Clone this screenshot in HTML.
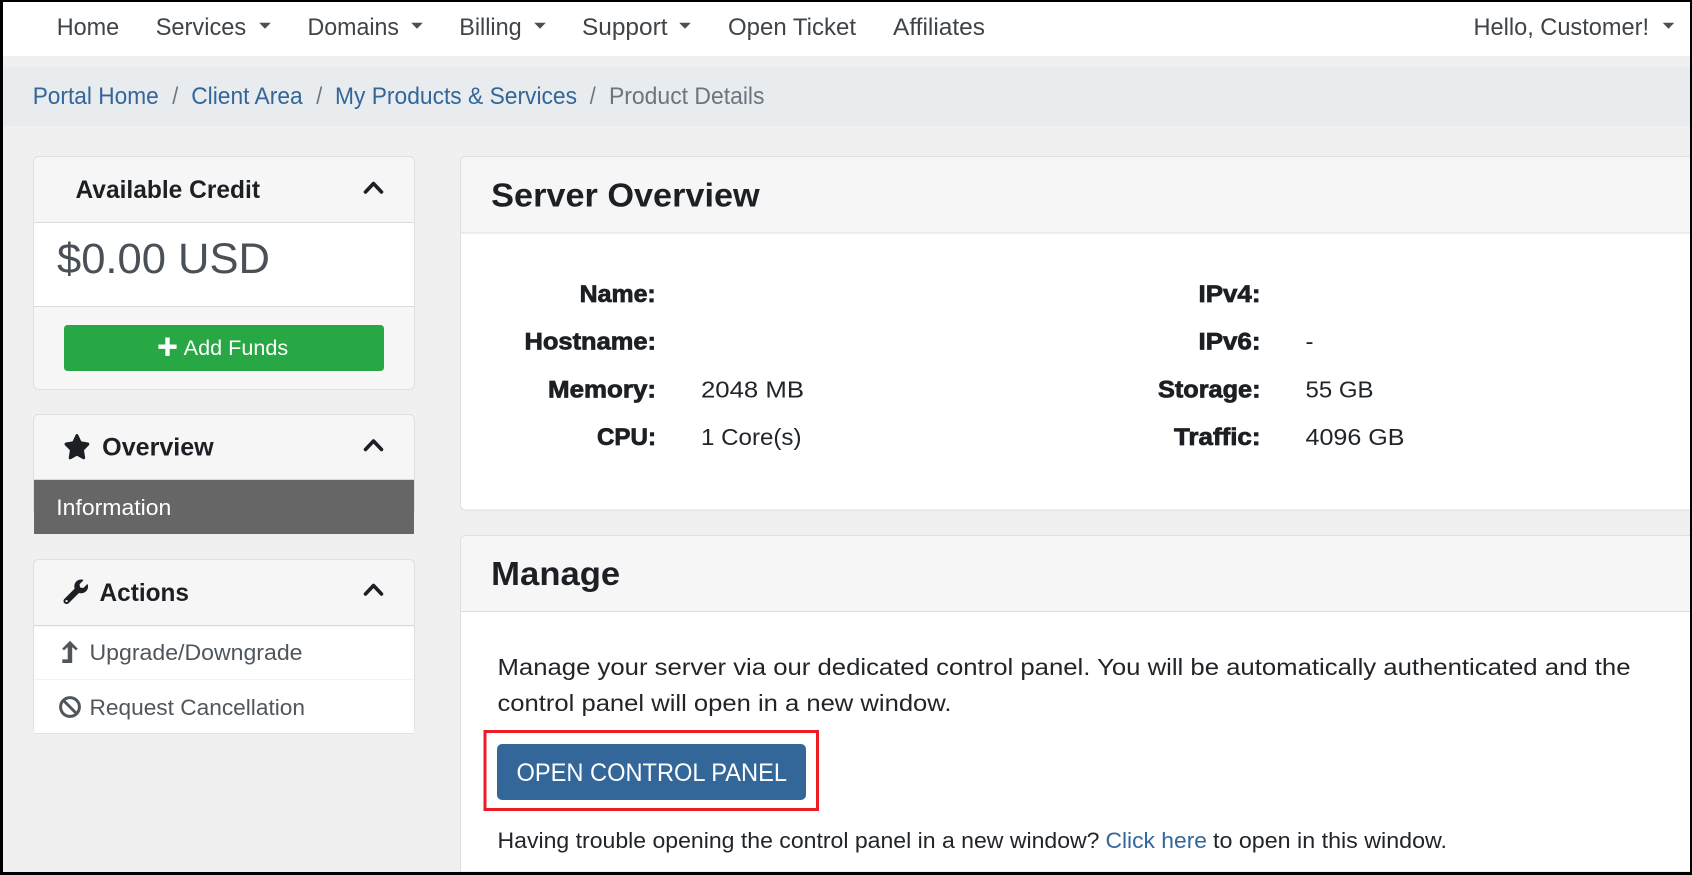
<!DOCTYPE html>
<html lang="en">
<head>
<meta charset="utf-8">
<title>Product Details</title>
<style>
html,body{margin:0;padding:0;background:#000;width:1692px;height:875px;overflow:hidden}
svg{display:block}
text{font-family:"Liberation Sans",Arial,sans-serif;white-space:pre}
.n{font-size:24px;fill:#3f4449}
.b{font-size:24px}
.l{fill:#336699}
.h{font-size:25px;font-weight:700;fill:#1c2024}
.t{font-size:33.5px;font-weight:700;fill:#1c2024}
.k{font-size:24px;font-weight:700;fill:#1c2024;stroke:#1c2024;stroke-width:.75}
.v{font-size:23.5px;fill:#212529}
.s{font-size:22.5px;fill:#4f565c}
.c{fill:none;stroke:#1c2024;stroke-width:3.6;stroke-linecap:round;stroke-linejoin:round}
.car{fill:#495057}
</style>
</head>
<body>
<svg width="1692" height="875" viewBox="0 0 1692 875" xmlns="http://www.w3.org/2000/svg">
  <rect width="1692" height="875" fill="#f0f0f0"/>
  <!-- nav -->
  <rect width="1692" height="56" fill="#fff"/>
  <text class="n" x="56.7" y="35" textLength="62.5" lengthAdjust="spacingAndGlyphs">Home</text>
  <text class="n" x="155.7" y="35" textLength="90.5" lengthAdjust="spacingAndGlyphs">Services</text>
  <path class="car" d="M259.2 22.8h11.6l-5.8 6z"/>
  <text class="n" x="307.5" y="35" textLength="91.5" lengthAdjust="spacingAndGlyphs">Domains</text>
  <path class="car" d="M411.2 22.8h11.6l-5.8 6z"/>
  <text class="n" x="459.2" y="35" textLength="62.5" lengthAdjust="spacingAndGlyphs">Billing</text>
  <path class="car" d="M534.2 22.8h11.6l-5.8 6z"/>
  <text class="n" x="582" y="35" textLength="85.5" lengthAdjust="spacingAndGlyphs">Support</text>
  <path class="car" d="M679.2 22.8h11.6l-5.8 6z"/>
  <text class="n" x="728" y="35" textLength="128" lengthAdjust="spacingAndGlyphs">Open Ticket</text>
  <text class="n" x="893" y="35" textLength="92" lengthAdjust="spacingAndGlyphs">Affiliates</text>
  <text class="n" x="1473.5" y="35" textLength="175.5" lengthAdjust="spacingAndGlyphs">Hello, Customer!</text>
  <path class="car" d="M1662.7 22.8h11.6l-5.8 6z"/>

  <!-- breadcrumb -->
  <rect y="67" width="1692" height="59" fill="#e9ecef"/>
  <text class="b l" x="32.7" y="104" textLength="126" lengthAdjust="spacingAndGlyphs">Portal Home</text>
  <text class="b" fill="#6c757d" x="172.2" y="104" textLength="6" lengthAdjust="spacingAndGlyphs">/</text>
  <text class="b l" x="191.2" y="104" textLength="111.5" lengthAdjust="spacingAndGlyphs">Client Area</text>
  <text class="b" fill="#6c757d" x="316.2" y="104" textLength="6" lengthAdjust="spacingAndGlyphs">/</text>
  <text class="b l" x="335" y="104" textLength="242" lengthAdjust="spacingAndGlyphs">My Products &amp; Services</text>
  <text class="b" fill="#6c757d" x="589.7" y="104" textLength="6" lengthAdjust="spacingAndGlyphs">/</text>
  <text class="b" fill="#6c757d" x="609" y="104" textLength="155.5" lengthAdjust="spacingAndGlyphs">Product Details</text>

  <!-- Available Credit -->
  <rect x="33.5" y="156.5" width="381" height="233" rx="5" fill="#f6f6f6" stroke="#dfdfdf"/>
  <rect x="34" y="222.5" width="380" height="84" fill="#fff"/>
  <path d="M34 222.5h380M34 306.5h380" stroke="#dcdcdc" stroke-width="1"/>
  <text class="h" x="75.5" y="198" textLength="184.5" lengthAdjust="spacingAndGlyphs">Available Credit</text>
  <path class="c" d="M365.5 192l8-8.5 8 8.5"/>
  <text font-size="43" fill="#495057" x="57" y="273" textLength="213" lengthAdjust="spacingAndGlyphs">$0.00 USD</text>
  <rect x="64" y="325" width="320" height="46" rx="3.5" fill="#28a745"/>
  <path d="M158.4 346.7h18.2M167.5 337.5v18.4" stroke="#fff" stroke-width="4.4" stroke-linejoin="round"/>
  <text font-size="21.5" fill="#fff" x="183.7" y="355" textLength="104.5" lengthAdjust="spacingAndGlyphs">Add Funds</text>

  <!-- Overview -->
  <rect x="33.5" y="414.5" width="381" height="100" rx="5" fill="#f6f6f6" stroke="#dfdfdf"/>
  <rect x="34" y="479" width="380" height="55" fill="#666"/>
  <rect x="34" y="479" width="380" height="1" fill="#d9d9d9"/>
  <path fill="#1c2024" transform="translate(63.6 434) scale(.0463 .0495)" d="M259.3 17.8L194 150.2 47.9 171.5c-26.2 3.8-36.7 36.1-17.7 54.6l105.7 103-25 145.5c-4.5 26.3 23.2 46 46.4 33.7L288 439.6l130.7 68.7c23.2 12.2 50.9-7.4 46.4-33.7l-25-145.5 105.7-103c19-18.5 8.5-50.8-17.7-54.6L382 150.2 316.7 17.8c-11.7-23.6-45.6-23.9-57.4 0z"/>
  <text class="h" x="102.2" y="455.5" textLength="111.5" lengthAdjust="spacingAndGlyphs">Overview</text>
  <path class="c" d="M365.5 449.5l8-8.5 8 8.5"/>
  <text font-size="22" fill="#fff" x="56.3" y="515" textLength="115" lengthAdjust="spacingAndGlyphs">Information</text>

  <!-- Actions -->
  <rect x="33.5" y="559.5" width="381" height="173.5" rx="5" fill="#f6f6f6" stroke="#dfdfdf"/>
  <rect x="34" y="625.5" width="380" height="107.5" fill="#fff"/>
  <rect x="33.5" y="733" width="381" height="1" fill="#e2e2e2"/>
  <rect x="34" y="625" width="380" height="1.2" fill="#d9d9d9"/>
  <rect x="34" y="679" width="380" height="1" fill="#f2f2f2"/>
  <path fill="#1c2024" transform="translate(63.5 579.5) scale(.048)" d="M507.73 109.1c-2.24-9.03-13.54-12.09-20.12-5.51l-74.36 74.36-67.88-11.31-11.31-67.88 74.36-74.36c6.62-6.62 3.43-17.9-5.66-20.16-47.38-11.74-99.55.91-136.58 37.93-39.64 39.64-50.55 97.1-34.05 147.2L18.74 402.76c-24.99 24.99-24.99 65.51 0 90.5 24.99 24.99 65.51 24.99 90.5 0l213.21-213.21c50.12 16.71 107.47 5.68 147.37-34.22 37.07-37.07 49.7-89.32 37.91-136.73zM64 472c-13.25 0-24-10.75-24-24 0-13.26 10.75-24 24-24s24 10.74 24 24c0 13.25-10.75 24-24 24z"/>
  <text class="h" x="99.5" y="601" textLength="89.5" lengthAdjust="spacingAndGlyphs">Actions</text>
  <path class="c" d="M365.5 594l8-8.5 8 8.5"/>
  <path fill="#4f565c" d="M70 640.7l7.8 8-1.9 1.7-3.7-3.3v15.9H62.3v-3.6h5.4v-12.3l-3.7 3.3-1.9-1.7z"/>
  <text class="s" x="89.5" y="660" textLength="213" lengthAdjust="spacingAndGlyphs">Upgrade/Downgrade</text>
  <circle cx="70" cy="707" r="9.4" fill="none" stroke="#4f565c" stroke-width="3"/>
  <path d="M63.5 700.5l13 13" stroke="#4f565c" stroke-width="3"/>
  <text class="s" x="89.5" y="715" textLength="215.5" lengthAdjust="spacingAndGlyphs">Request Cancellation</text>

  <!-- Server Overview -->
  <path d="M1690 156.5H465.5a5 5 0 0 0-5 5V505a5 5 0 0 0 5 5H1690" fill="#fff" stroke="#dfdfdf"/>
  <path d="M461 233V161.5a4.5 4.5 0 0 1 4.5-4.5H1690V233z" fill="#f6f6f6"/>
  <rect x="461" y="232.5" width="1229" height="1" fill="#dcdcdc"/>
  <text class="t" x="491.2" y="206.5" textLength="268.5" lengthAdjust="spacingAndGlyphs">Server Overview</text>

  <text class="k" x="579.7" y="302" textLength="76" lengthAdjust="spacingAndGlyphs">Name:</text>
  <text class="k" x="524.5" y="349.5" textLength="131.5" lengthAdjust="spacingAndGlyphs">Hostname:</text>
  <text class="k" x="548" y="397.5" textLength="108" lengthAdjust="spacingAndGlyphs">Memory:</text>
  <text class="k" x="597" y="445" textLength="59" lengthAdjust="spacingAndGlyphs">CPU:</text>
  <text class="v" x="701" y="397.5" textLength="103" lengthAdjust="spacingAndGlyphs">2048 MB</text>
  <text class="v" x="701" y="445" textLength="100.5" lengthAdjust="spacingAndGlyphs">1 Core(s)</text>

  <text class="k" x="1198.5" y="302" textLength="62" lengthAdjust="spacingAndGlyphs">IPv4:</text>
  <text class="k" x="1198.5" y="349.5" textLength="62" lengthAdjust="spacingAndGlyphs">IPv6:</text>
  <text class="k" x="1158" y="397.5" textLength="102.5" lengthAdjust="spacingAndGlyphs">Storage:</text>
  <text class="k" x="1174" y="445" textLength="86.5" lengthAdjust="spacingAndGlyphs">Traffic:</text>
  <text class="v" x="1305.5" y="349.5" textLength="8" lengthAdjust="spacingAndGlyphs">-</text>
  <text class="v" x="1305.5" y="397.5" textLength="68" lengthAdjust="spacingAndGlyphs">55 GB</text>
  <text class="v" x="1305.5" y="445" textLength="99" lengthAdjust="spacingAndGlyphs">4096 GB</text>

  <!-- Manage -->
  <path d="M1690 535.5H465.5a5 5 0 0 0-5 5V872H1690" fill="#fff" stroke="#dfdfdf"/>
  <path d="M461 611V540.5a4.5 4.5 0 0 1 4.5-4.5H1690V611z" fill="#f6f6f6"/>
  <rect x="461" y="611" width="1229" height="1" fill="#dcdcdc"/>
  <text class="t" x="491.2" y="585" textLength="129" lengthAdjust="spacingAndGlyphs">Manage</text>

  <text class="v" x="497.5" y="675" textLength="1133" lengthAdjust="spacingAndGlyphs">Manage your server via our dedicated control panel. You will be automatically authenticated and the</text>
  <text class="v" x="497.5" y="711" textLength="454" lengthAdjust="spacingAndGlyphs">control panel will open in a new window.</text>

  <rect x="485" y="731.5" width="332.5" height="78" fill="none" stroke="#ed1c24" stroke-width="3"/>
  <rect x="497" y="744" width="309" height="56" rx="5" fill="#336699"/>
  <text font-size="25" fill="#fff" x="516.5" y="781" textLength="270.5" lengthAdjust="spacingAndGlyphs">OPEN CONTROL PANEL</text>

  <text class="v" x="497.5" y="848" style="font-size:22px" textLength="602" lengthAdjust="spacingAndGlyphs">Having trouble opening the control panel in a new window?</text>
  <text class="v l" x="1105.5" y="848" style="font-size:22px;fill:#336699" textLength="101.5" lengthAdjust="spacingAndGlyphs">Click here</text>
  <text class="v" x="1213" y="848" style="font-size:22px" textLength="234" lengthAdjust="spacingAndGlyphs">to open in this window.</text>

  <!-- screenshot frame -->
  <path d="M0 0H1692V875H0zM3 2V872H1690V2z" fill="#000" fill-rule="evenodd"/>
</svg>
</body>
</html>
